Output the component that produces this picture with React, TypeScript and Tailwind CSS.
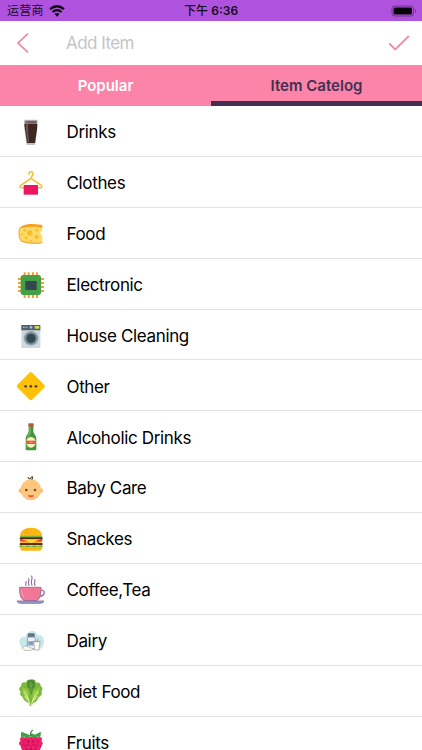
import type { ReactNode } from 'react';

const DrinksIcon = () => (
  <>
    <path d="M27 14 Q27 11 31 11 H64 Q68 11 68 14 L67 38 L61 84 Q60 87 57 87 H38 Q35 87 34 84 L28 38Z" fill="#c6bfc2" />
    <path d="M28 24 H67 L66 40 L60 81 H36 L30 40Z" fill="#3e2723" />
    <path d="M31 14 H65 L65 23 H30Z" fill="#745e5d" />
    <path d="M33 15 H39 V40 L42 78 H38 L33 40Z" fill="#8d7d7b" opacity=".55" />
  </>
);

const ClothesIcon = () => (
  <>
    <path d="M42 22 C41 11 55 12 54 22 C53 28 48 27 48 34 L79 55 Q83 62 76 62 H20 Q12 61 17 55 L48 34" fill="none" stroke="#f8bd2c" strokeWidth="4.5" strokeLinecap="round" strokeLinejoin="round" />
    <rect x="26" y="54" width="43" height="29" fill="#ec1561" />
  </>
);

const FoodIcon = () => (
  <>
    <path d="M13 32 C16 23 33 18 52 18 L80 20 Q83 21 82 26 V32Z" fill="#f9a01b" />
    <path d="M15 31 Q45 23 82 29 V37 C75 39 74 50 82 53 V75 Q48 80 20 69 Q9 52 15 31Z" fill="#ffda68" />
    <path d="M14 31 Q9 54 19 69 Q46 79 82 74" fill="none" stroke="#f6b13d" strokeWidth="4" />
    <g fill="#f8bd25">
      <circle cx="44" cy="45" r="8" />
      <circle cx="29" cy="37" r="4" />
      <circle cx="33" cy="59" r="4.5" />
      <circle cx="66" cy="37" r="4" />
      <circle cx="65" cy="57" r="6" />
      <circle cx="49" cy="68" r="3" />
      <circle cx="21" cy="49" r="3" />
    </g>
  </>
);

const ElectronicIcon = () => (
  <>
    <path d="M29 10V87M41 10V87M54 10V87M66 10V87M9 30H87M9 42H87M9 54H87M9 66H87" stroke="#f5a02c" strokeWidth="6" />
    <rect x="17" y="18" width="61" height="60" rx="8" fill="#43a047" />
    <rect x="31" y="36" width="34" height="27" rx="1" fill="#37474f" />
  </>
);

const HouseCleaningIcon = () => (
  <>
    <rect x="19" y="15" width="57" height="69" rx="2" fill="#cfd8dc" />
    <path d="M19 17Q19 15 21 15H74Q76 15 76 17V31H19Z" fill="#4f626e" />
    <path d="M24 22H37" stroke="#aebcc3" strokeWidth="4" strokeDasharray="5 3" />
    <circle cx="48" cy="22" r="4" fill="#b0bec5" />
    <rect x="59" y="18" width="14" height="8" fill="#cddc55" />
    <circle cx="48" cy="55" r="22" fill="#90a4ae" />
    <circle cx="48" cy="55" r="17" fill="#607a88" />
    <circle cx="48" cy="55" r="13" fill="#37474f" />
  </>
);

const OtherIcon = () => (
  <>
    <rect x="16" y="17" width="63" height="63" rx="6" transform="rotate(45 47.5 48.5)" fill="#ffc107" />
    <g fill="#4e3f31">
      <circle cx="32" cy="49" r="4" />
      <circle cx="47.500" cy="49" r="4" />
      <circle cx="63" cy="49" r="4" />
    </g>
  </>
);

const AlcoholicIcon = () => (
  <>
    <path d="M41 12H55V31C56 39 64 43 64 54V84Q64 88 60 88H36Q32 88 32 84V54C32 43 40 39 41 31Z" fill="#43963e" />
    <path d="M43 15H47V34C46 44 39 46 38 57V82H35V54C36 43 42 40 43 31Z" fill="#72b85c" />
    <rect x="40" y="7" width="16" height="10" rx="2" fill="#bd5b38" />
    <ellipse cx="48" cy="64" rx="14" ry="16" fill="#fff1c2" />
    <path d="M34 59H62V69H34Z" fill="#e65332" />
    <path d="M42 64H54" stroke="#ffc6a5" strokeWidth="2" />
  </>
);

const BabyIcon = () => (
  <>
    <path d="M39 17Q46 25 48 17M49 24Q55 21 51 13" fill="none" stroke="#5d4540" strokeWidth="3.500" strokeLinecap="round" />
    <circle cx="18" cy="56" r="7" fill="#ffb566" />
    <circle cx="77" cy="56" r="7" fill="#ffb566" />
    <ellipse cx="47.500" cy="53.500" rx="31" ry="31.500" fill="#ffc77d" />
    <circle cx="34" cy="54" r="4" fill="#674a37" />
    <circle cx="60" cy="54" r="4" fill="#674a37" />
    <path d="M38 68Q48 72 57 68Q55 76 48 76Q40 76 38 68Z" fill="#f0503d" />
  </>
);

const SnackesIcon = () => (
  <>
    <path d="M15 39C15 23 29 14 48 14S81 23 81 39V43H15Z" fill="#fbb714" />
    <g fill="#d9860a">
      <circle cx="36" cy="22" r="2" />
      <circle cx="31" cy="29" r="2" />
      <circle cx="40" cy="29" r="2" />
    </g>
    <rect x="15" y="38" width="67" height="6" rx="3" fill="#7cb342" />
    <rect x="14" y="43" width="69" height="7" rx="3" fill="#5b2b1d" />
    <rect x="15" y="50" width="67" height="6" rx="3" fill="#ee3c28" />
    <path d="M16 56H80V60H16Z" fill="#fbb714" />
    <path d="M19 49H78L63 53L49 61L34 53Z" fill="#ffda3b" />
    <rect x="14" y="60" width="69" height="7" rx="3" fill="#5b2b1d" />
    <path d="M13 68Q18 65 23 68T33 68T43 68T53 68T63 68T73 68T83 68V73H13Z" fill="#75b62f" />
    <path d="M16 72H81V77Q80 83 73 83H23Q16 83 16 77Z" fill="#fbb714" />
  </>
);

const CoffeeIcon = () => (
  <>
    <path d="M33 34C28 29 37 27 33 22M42 34C36 25 45 22 41 14M51 34C44 23 55 16 50 6M60 34C54 27 63 22 59 17" fill="none" stroke="#866899" strokeWidth="3.200" strokeLinecap="round" />
    <path d="M75 49C91 44 95 66 70 68" fill="none" stroke="#9274a5" strokeWidth="4" />
    <path d="M14 40H78V53Q75 76 65 80H28Q16 74 14 53Z" fill="#f27797" stroke="#a56d9a" strokeWidth="3" />
    <path d="M19 47Q20 62 27 71" fill="none" stroke="#f7a2b7" strokeWidth="3" />
    <path d="M6 81H87Q85 88 76 88H17Q8 88 6 81Z" fill="#929ed0" stroke="#856a9b" strokeWidth="2.500" />
  </>
);

const DairyIcon = () => (
  <>
    <path d="M15 57C8 46 18 34 33 34C36 16 61 12 66 28C72 34 83 27 86 43C90 59 82 73 67 75H27Q18 69 15 57Z" fill="#c5e9e6" />
    <rect x="38" y="25" width="21" height="12" rx="3" fill="#60758a" />
    <path d="M39 36H58L61 43V72H37V43Z" fill="#eef2f7" stroke="#6c7c8e" strokeWidth="2" />
    <rect x="39" y="48" width="20" height="14" fill="#9db4da" />
    <path d="M43 53H55M43 57H52" stroke="#557aa8" strokeWidth="2" />
    <path d="M21 70Q27 60 40 65L55 72L50 76H27Z" fill="#fff7ed" stroke="#a8a49f" strokeWidth="2" />
    <path d="M56 50H75L72 75H59Z" fill="#fffaf0" stroke="#9c9c98" strokeWidth="2" />
    <path d="M54 49H77M66 49L70 40" stroke="#9f9a96" strokeWidth="2.500" />
  </>
);

const DietIcon = () => (
  <>
    <path d="M48 11C59 8 62 14 63 20C72 18 78 22 77 31C84 35 84 41 79 47C83 54 78 60 71 63C69 74 61 78 55 81L49 90H44L40 80C31 77 24 72 23 63C16 59 13 53 17 47C10 41 12 34 19 30C17 21 24 17 33 20C35 13 39 9 48 11Z" fill="#7cb83a" />
    <path d="M21 32L39 44L42 77Q28 72 27 59Q20 50 25 45ZM76 34L55 45L51 77Q66 72 67 59Q75 50 70 44Z" fill="#9ccc48" />
    <path d="M48 11C59 10 60 17 59 22C63 30 58 36 54 38L49 58L43 38C35 34 35 28 37 22C36 15 39 11 48 11Z" fill="#4d8c32" />
    <path d="M48 18V48M41 25L48 31L55 25" fill="none" stroke="#84b94b" strokeWidth="2" />
    <path d="M27 47Q38 57 45 88M69 47Q55 60 49 88M31 61L42 76M66 61L52 77" fill="none" stroke="#e1efae" strokeWidth="3" strokeLinecap="round" />
  </>
);

const berries = [
  [22, 37], [35, 35], [48, 36], [61, 35], [74, 37],
  [19, 49], [32, 48], [47, 49], [62, 48], [76, 49],
  [25, 61], [40, 61], [55, 61], [70, 61],
  [28, 73], [42, 74], [56, 74], [68, 72],
  [37, 84], [50, 86], [62, 83],
];

const FruitsIcon = () => (
  <>
    <path d="M21 32H75L80 55L69 81L48 92L26 80L16 54Z" fill="#b3124c" />
    {berries.map(([cx, cy], i) => (
      <circle key={i} cx={cx} cy={cy} r="7" fill="#f11f6b" />
    ))}
    <path d="M18 30Q16 19 20 14L36 21L46 25L50 19L60 23L77 14Q79 26 74 30L61 29L55 34L47 28L37 34L31 29Z" fill="#43a047" />
    <path d="M47 27Q45 14 54 9" fill="none" stroke="#388e4c" strokeWidth="4" />
  </>
);

const items: { label: string; icon: ReactNode }[] = [
  { label: 'Drinks', icon: <DrinksIcon /> },
  { label: 'Clothes', icon: <ClothesIcon /> },
  { label: 'Food', icon: <FoodIcon /> },
  { label: 'Electronic', icon: <ElectronicIcon /> },
  { label: 'House Cleaning', icon: <HouseCleaningIcon /> },
  { label: 'Other', icon: <OtherIcon /> },
  { label: 'Alcoholic Drinks', icon: <AlcoholicIcon /> },
  { label: 'Baby Care', icon: <BabyIcon /> },
  { label: 'Snackes', icon: <SnackesIcon /> },
  { label: 'Coffee,Tea', icon: <CoffeeIcon /> },
  { label: 'Dairy', icon: <DairyIcon /> },
  { label: 'Diet Food', icon: <DietIcon /> },
  { label: 'Fruits', icon: <FruitsIcon /> },
];

function StatusBar() {
  return (
    <div className="grid h-[21px] shrink-0 grid-cols-3 items-center bg-[#af52de] text-[12px] leading-none text-[#170b1e]">
      <div className="flex items-center gap-[5px] pl-[7px]">
        <span className="tracking-[0.2px]">运营商</span>
        <svg width="16" height="12" viewBox="0 0 16 12" fill="none" stroke="#0b030f" strokeWidth="2.200">
          <path d="M1 4.200Q8-1.700 15 4.200M3.500 7Q8 3.200 12.500 7" />
          <path d="M5.500 9Q8 7 10.500 9L8 11.700Z" fill="#0b030f" stroke="none" />
        </svg>
      </div>
      <div className="pt-px text-center whitespace-nowrap">
        <span className="font-medium">下午</span> <span className="font-semibold">6:36</span>
      </div>
      <div className="flex justify-end pr-[5px]">
        <svg width="26" height="12" viewBox="0 0 26 12">
          <rect x="1" y="1" width="21.500" height="10" rx="2.800" fill="none" stroke="#6c3488" />
          <rect x="2.500" y="2.500" width="18.500" height="7" rx="1.500" fill="#080109" />
          <path d="M24 4Q26 6 24 8Z" fill="#6c3488" />
        </svg>
      </div>
    </div>
  );
}

export default function App() {
  return (
    <div className="flex h-[750px] w-[422px] flex-col overflow-hidden bg-white font-[Inter,'Noto_Sans_CJK_SC',sans-serif]">
      <StatusBar />

      <header className="flex h-11 shrink-0 items-center pr-[12px] pl-[16px]">
        <svg width="14" height="22" viewBox="0 0 14 22" fill="none" stroke="#f27fa4" strokeWidth="1.700">
          <path d="M12 1.500L2 11L12 20.500" />
        </svg>
        <span className="ml-[36px] flex-1 pt-[2px] text-[17px] tracking-[-0.55px] text-[#c5c5c7]">Add Item</span>
        <svg width="22" height="16" viewBox="0 0 22 16" fill="none" stroke="#f58aaa" strokeWidth="1.900">
          <path d="M1.300 8.500L7.200 14.500L20.800 1" />
        </svg>
      </header>

      <nav className="grid h-[41px] shrink-0 grid-cols-2 bg-[#fc84a8] text-center text-[15px] leading-[41px] font-semibold">
        <button className="text-white">Popular</button>
        <button className="border-b-[5px] border-[#432f52] text-[#432f52]">
          <span className="block h-9">Item Catelog</span>
        </button>
      </nav>

      <ul>
        {items.map((item) => (
          <li key={item.label} className="flex h-[50.9px] items-center border-b border-[#e3e3e4] pt-[2px] pl-[15px]">
            <svg className="mr-[19.500px] shrink-0" width="32" height="32" viewBox="0 0 96 96">
              {item.icon}
            </svg>
            <span className="pt-[2px] text-[17px] tracking-[-0.35px] text-black">{item.label}</span>
          </li>
        ))}
      </ul>
    </div>
  );
}
